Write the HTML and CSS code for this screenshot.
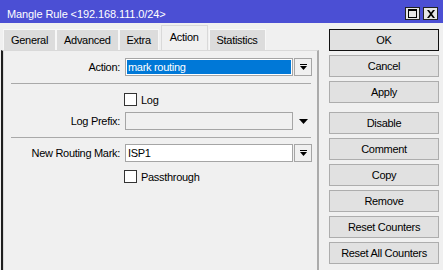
FILE: index.html
```html
<!DOCTYPE html>
<html>
  <head>
    <meta charset="UTF-8" />
    <title>Mangle Rule</title>
    <link rel="stylesheet" href="styles.css">
  </head>
  <body>
    <div class="window">
      <div class="titlebar">
        <span class="title">Mangle Rule &lt;192.168.111.0/24&gt;</span>
        <div class="title-btns">
          <span class="tbtn">
            <svg width="9" height="9" viewBox="0 0 9 9"><path d="M0 0h9v9H0zM1 2v6h7V2z" fill="#000" fill-rule="evenodd"/></svg>
          </span>
          <span class="tbtn">
            <svg width="8" height="8" viewBox="0 0 8 8"><path d="M0 0h2l2 2.5L6 0h2L5 4l3 4H6L4 5.5 2 8H0l3-4z" fill="#000"/></svg>
          </span>
        </div>
      </div>

      <div class="main">
        <div class="left">
          <div class="tabs">
            <span class="tab">General</span>
            <span class="tab">Advanced</span>
            <span class="tab">Extra</span>
            <span class="tab active">Action</span>
            <span class="tab">Statistics</span>
          </div>

          <div class="panel">
            <div class="row first">
              <span class="label">Action:</span>
              <span class="field"><span class="selected">mark routing</span></span>
              <span class="drop">
                <svg width="7" height="7" viewBox="0 0 7 7"><path d="M0 0h7v1H0zM0 2h7L3.5 6z" fill="#000"/></svg>
              </span>
            </div>

            <div class="sep"></div>

            <div class="check-row log">
              <span class="box"></span>
              <span>Log</span>
            </div>

            <div class="row prefix">
              <span class="label">Log Prefix:</span>
              <span class="field disabled"></span>
              <span class="arrow">
                <svg width="9" height="5" viewBox="0 0 9 5"><path d="M0 0h9L4.5 5z" fill="#000"/></svg>
              </span>
            </div>

            <div class="sep"></div>

            <div class="row mark">
              <span class="label">New Routing Mark:</span>
              <span class="field">ISP1</span>
              <span class="drop">
                <svg width="7" height="7" viewBox="0 0 7 7"><path d="M0 0h7v1H0zM0 2h7L3.5 6z" fill="#000"/></svg>
              </span>
            </div>

            <div class="check-row pass">
              <span class="box"></span>
              <span>Passthrough</span>
            </div>
          </div>
        </div>

        <div class="actions">
          <button class="btn default">OK</button>
          <button class="btn">Cancel</button>
          <button class="btn">Apply</button>
          <button class="btn spaced">Disable</button>
          <button class="btn">Comment</button>
          <button class="btn">Copy</button>
          <button class="btn">Remove</button>
          <button class="btn">Reset Counters</button>
          <button class="btn">Reset All Counters</button>
        </div>
      </div>
    </div>
  </body>
</html>
```

FILE: styles.css
```css
*,
*::after,
*::before {
  box-sizing: border-box;
}
body {
  margin: 0;
  font-family: 'Liberation Sans', Arial, sans-serif;
  font-size: 11px;
  letter-spacing: -0.3px;
  color: #000;
  background-color: #f0f0f0;
}
.window {
  width: 443px;
  height: 270px;
  overflow: hidden;
  background-color: #f0f0f0;
}

/* title bar */
.titlebar {
  height: 23px;
  padding: 4px 5px 0 7px;
  display: flex;
  align-items: center;
  background-color: #4b4fd4;
  color: #fff;
}
.title {
  flex: 1;
  letter-spacing: -0.1px;
}
.title-btns {
  display: flex;
  gap: 3px;
}
.tbtn {
  width: 15px;
  height: 13px;
  display: flex;
  align-items: center;
  justify-content: center;
  background-color: #e6e6e6;
  border: 1px solid #222;
}

.main {
  display: flex;
  height: 247px;
}
.left {
  width: 319px;
  padding-left: 1px;
  display: flex;
  flex-direction: column;
}

/* tabs */
.tabs {
  height: 27px;
  padding-left: 2px;
  display: flex;
  align-items: flex-end;
}
.tab {
  height: 21px;
  padding: 4px 7px 0;
  background-color: #dcdcdc;
  border: 1px solid #f7f7f7;
  border-bottom: none;
}
.tab.active {
  height: 25px;
  margin: 0 1px 0 2px;
  padding: 5px 8px 0;
  background-color: #f0f0f0;
  border-color: #d9d9d9;
}

/* tab body */
.panel {
  flex: 1;
  padding-top: 7px;
  border-top: 1px solid #d9d9d9;
  border-left: 2px solid #1e1e1e;
  border-right: 2px solid #ababab;
  box-shadow: inset 1px 0 #d9d9d9;
}
.row {
  display: flex;
  align-items: center;
  height: 18px;
}
.label {
  width: 117px;
  margin-right: 5px;
  text-align: right;
}
.field {
  width: 168px;
  height: 18px;
  padding: 1px;
  display: flex;
  align-items: center;
  background-color: #fff;
  border: 1px solid #a5a5a5;
}
.row.mark .field {
  padding-left: 2px;
}
.selected {
  flex: 1;
  align-self: stretch;
  padding-left: 1px;
  line-height: 14px;
  background-color: #0078d7;
  color: #fff;
}
.field.disabled {
  background-color: #f0f0f0;
}
.drop {
  width: 18px;
  height: 18px;
  margin-left: 1px;
  display: flex;
  align-items: center;
  justify-content: center;
  background-color: #f0f0f0;
  border: 1px solid #a5a5a5;
}
.arrow {
  width: 18px;
  margin-left: 1px;
  display: flex;
  justify-content: center;
}
.sep {
  width: 300px;
  height: 1px;
  margin: 7px 0 0 8px;
  background-color: #a9a9a9;
}
.check-row {
  display: flex;
  align-items: center;
  gap: 4px;
  height: 13px;
  padding-left: 121px;
}
.box {
  width: 13px;
  height: 13px;
  background-color: #fff;
  border: 1px solid #333;
}
.log {
  margin-top: 9px;
}
.prefix {
  margin-top: 6px;
}
.mark {
  margin-top: 6px;
}
.pass {
  margin-top: 8px;
}

/* buttons on the right */
.actions {
  width: 110px;
  margin-left: 10px;
  padding-top: 6px;
  display: flex;
  flex-direction: column;
  gap: 4px;
}
.btn {
  height: 22px;
  padding: 0;
  font: inherit;
  letter-spacing: inherit;
  color: #000;
  background-color: #e1e1e1;
  border: 1px solid #adadad;
}
.btn.default {
  border-color: #111;
}
.btn.spaced {
  margin-top: 5px;
}
```
